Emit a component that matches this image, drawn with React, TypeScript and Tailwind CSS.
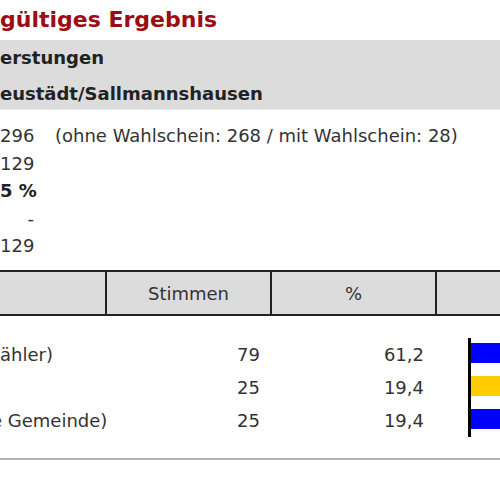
import React from 'react';

const stats = [
  { value: '296', note: '(ohne Wahlschein: 268 / mit Wahlschein: 28)' },
  { value: '129' },
  { value: '5 %', bold: true },
  { value: '-' },
  { value: '129' },
];

const parties = [
  { name: 'ähler)', shift: '', votes: '79', pct: '61,2', color: 'bg-[#0000ff]' },
  { name: '', shift: '', votes: '25', pct: '19,4', color: 'bg-[#ffcc00]' },
  { name: 'e Gemeinde)', shift: '-ml-[9px]', votes: '25', pct: '19,4', color: 'bg-[#0000ff]' },
];

export default function App() {
  return (
    <div className="w-[500px] h-[500px] overflow-hidden bg-white text-[#333] font-['DejaVu_Sans',Verdana,sans-serif]">
      {/* Title */}
      <h1 className="h-[40px] leading-[40px] text-[22px] font-bold text-[#9c0c12] whitespace-nowrap">gültiges Ergebnis</h1>

      {/* Gebiet */}
      <div className="h-[70px] bg-[#dcdcdc] border-b border-[#ececec] text-[18px] font-bold text-[#222] whitespace-nowrap">
        <div className="h-[36px] leading-[36px]">erstungen</div>
        <div className="h-[34px] leading-[36px]">eustädt/Sallmannshausen</div>
      </div>

      {/* Kennzahlen */}
      <div className="pt-[12px] h-[160px] text-[18px]">
        {stats.map((s, i) => (
          <div key={i} className="flex h-[27.5px] items-center whitespace-nowrap">
            <span className={`w-[34px] text-right ${s.bold ? 'font-bold text-[#222]' : ''}`}>{s.value}</span>
            {s.note && <span className="ml-[21px]">{s.note}</span>}
          </div>
        ))}
      </div>

      {/* Tabelle */}
      <div className="grid grid-cols-[107px_165px_165px_1fr] h-[46px] bg-[#dcdcdc] border-y-2 border-[#222] text-[18px]">
        <div className="border-r-2 border-[#222]"></div>
        <div className="border-r-2 border-[#222] flex items-center justify-center">Stimmen</div>
        <div className="border-r-2 border-[#222] flex items-center justify-center">%</div>
        <div></div>
      </div>

      <div className="pt-[22px] text-[18px]">
        {parties.map((p, i) => (
          <div key={i} className="grid grid-cols-[107px_165px_165px_1fr] h-[33px] items-center whitespace-nowrap">
            <div className="overflow-hidden"><div className={p.shift}>{p.name}</div></div>
            <div className="text-right pr-[12px]">{p.votes}</div>
            <div className="text-right pr-[13px]">{p.pct}</div>
            <div className="h-full pl-[31px]">
              <div className="h-full border-l-[3px] border-black pt-[5px]">
                <div className={`h-[20px] w-full ${p.color}`}></div>
              </div>
            </div>
          </div>
        ))}
      </div>

      <div className="mt-[21px] h-[2px] bg-[#b4b4b4]"></div>
    </div>
  );
}
